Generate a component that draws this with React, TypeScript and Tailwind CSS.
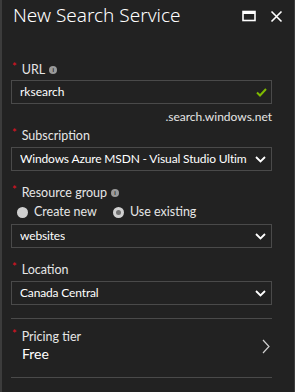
import React from 'react';

const Star = () => <span className="text-[#e81123] text-[11px] mr-[5px] relative -top-[3px]">*</span>;

const Info = () => (
  <span className="inline-flex items-center justify-center w-[8px] h-[8px] rounded-full bg-[#9a9a9a] ml-[4px] text-[6px] leading-none text-[#222] font-bold">
    i
  </span>
);

const ChevronDown = () => (
  <svg width="11" height="7" viewBox="0 0 11 7" className="shrink-0">
    <path d="M1 1l4.5 4.5L10 1" stroke="#ffffff" strokeWidth="1.8" fill="none" />
  </svg>
);

const Label: React.FC<{ text: string; info?: boolean; className?: string }> = ({ text, info, className }) => (
  <div className={`flex items-center pl-[10px] text-[12.5px] text-[#e6e6e6] leading-[16px] ${className ?? ''}`}>
    <Star />
    <span>{text}</span>
    {info && <Info />}
  </div>
);

const Select: React.FC<{ value: string; className?: string }> = ({ value, className }) => (
  <div className={`ml-[9px] mr-[22px] h-[24px] border border-[#4a4a4a] flex items-center justify-between gap-[4px] pl-[8px] pr-[5px] text-[12px] text-white ${className ?? ''}`}>
    <span className="whitespace-nowrap overflow-hidden tracking-[-0.15px]">{value}</span>
    <ChevronDown />
  </div>
);

export default function App() {
  return (
    <div
      className="w-[295px] h-[392px] bg-[#222222] border-l-2 border-r border-[#3c3c3c] flex flex-col overflow-hidden"
      style={{ fontFamily: 'Lato, "Noto Sans", sans-serif' }}
    >
      <div className="flex items-center justify-between h-[32px] pl-[11px] pr-[11px]">
        <div
          className="text-[19px] text-white font-light leading-none -mt-[2px]"
          style={{ fontFamily: '"Noto Sans", sans-serif' }}
        >
          New Search Service
        </div>
        <div className="flex items-center gap-[14px]">
          <svg width="14" height="12" viewBox="0 0 14 12">
            <rect x="1" y="1.5" width="12" height="9" stroke="#fff" strokeWidth="1.6" fill="none" />
            <rect x="1" y="1" width="12" height="3" fill="#fff" />
          </svg>
          <svg width="13" height="13" viewBox="0 0 13 13">
            <path d="M1.5 1.5l10 10M11.5 1.5l-10 10" stroke="#fff" strokeWidth="1.6" />
          </svg>
        </div>
      </div>

      <Label text="URL" info className="mt-[30px]" />
      <div className="ml-[9px] mr-[22px] mt-[2px] h-[24px] border border-[#4a4a4a] flex items-center justify-between pl-[8px] pr-[4px] text-[12px] text-white">
        <span>rksearch</span>
        <svg width="11" height="9" viewBox="0 0 11 9">
          <path d="M1 4.5l3 3L10 1" stroke="#7fba00" strokeWidth="2" fill="none" />
        </svg>
      </div>
      <div className="mr-[22px] text-right text-[12px] text-[#e6e6e6] mt-[5px] leading-[16px]">.search.windows.net</div>

      <Label text="Subscription" className="mt-[3px]" />
      <Select value="Windows Azure MSDN - Visual Studio Ultim" className="mt-[3px]" />

      <Label text="Resource group" info className="mt-[14px]" />
      <div className="flex items-center pl-[15px] mt-[3px] text-[12.5px] text-[#e6e6e6] leading-[16px]">
        <span className="w-[11px] h-[11px] rounded-full bg-[#d0d0d0] mr-[6px]" />
        <span className="mr-[16px]">Create new</span>
        <span className="w-[11px] h-[11px] rounded-full bg-[#d0d0d0] flex items-center justify-center mr-[6px]">
          <span className="w-[5px] h-[5px] rounded-full bg-[#707070]" />
        </span>
        <span>Use existing</span>
      </div>
      <Select value="websites" className="mt-[4px]" />

      <Label text="Location" className="mt-[14px]" />
      <Select value="Canada Central" className="mt-[3px]" />

      <div className="ml-[9px] mr-[22px] mt-[13px] border-t border-[#4a4a4a]" />
      <div className="flex items-center justify-between pr-[24px] mt-[10px]">
        <div>
          <Label text="Pricing tier" />
          <div className="pl-[20px] text-[14px] text-white leading-[18px]">Free</div>
        </div>
        <svg width="8" height="15" viewBox="0 0 8 15">
          <path d="M1 1l6 6.5L1 14" stroke="#d0d0d0" strokeWidth="1.2" fill="none" />
        </svg>
      </div>
      <div className="ml-[9px] mr-[22px] mt-[14px] border-t border-[#4a4a4a]" />
    </div>
  );
}
